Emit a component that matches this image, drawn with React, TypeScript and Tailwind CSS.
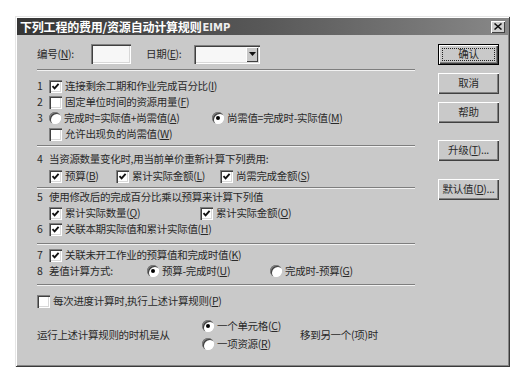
import type { ReactNode } from 'react'

function K({ children }: { children: ReactNode }) {
  return <span className="underline underline-offset-[1px]">{children}</span>
}

function Check({ on = false }: { on?: boolean }) {
  return (
    <span className="flex h-[13px] w-[13px] shrink-0 items-center justify-center bg-white shadow-[inset_1px_1px_0_#808080,inset_2px_2px_0_#404040,inset_-1px_-1px_0_#ffffff,inset_-2px_-2px_0_#d8d8d8]">
      {on && (
        <svg width="9" height="9" viewBox="0 0 9 9">
          <path d="M1.5 4.2 L3.6 6.4 L7.6 1.8" fill="none" stroke="#111" strokeWidth="1.9" />
        </svg>
      )}
    </span>
  )
}

function Radio({ on = false }: { on?: boolean }) {
  return (
    <span className="flex h-[12px] w-[12px] shrink-0 items-center justify-center rounded-full bg-white shadow-[inset_1px_1px_0_#808080,inset_2px_2px_0_#404040,inset_-1px_-1px_0_#ffffff]">
      {on && <span className="h-[4px] w-[4px] rounded-full bg-black" />}
    </span>
  )
}

function Sep() {
  return <div className="h-[2px] border-t border-b border-t-[#7e7e7e] border-b-[#f2f2f2]" />
}

function Btn({ children, def = false }: { children: ReactNode; def?: boolean }) {
  if (def) {
    return (
      <div className="h-[21px] w-[61px] border border-black">
        <div className="flex h-full w-full p-[3px] shadow-[inset_1px_1px_0_#ffffff,inset_-1px_-1px_0_#404040,inset_-2px_-2px_0_#808080]">
          <div className="flex flex-1 items-center justify-center border border-dotted border-[#222]">{children}</div>
        </div>
      </div>
    )
  }
  return (
    <div className="flex h-[21px] w-[61px] items-center justify-center shadow-[inset_1px_1px_0_#ffffff,inset_-1px_-1px_0_#404040,inset_-2px_-2px_0_#808080]">
      {children}
    </div>
  )
}

// one line of the rule list: number column, then the control
function Row({ n, children, className = '' }: { n?: string; children: ReactNode; className?: string }) {
  return (
    <div className={'flex h-[16px] items-center ' + className}>
      <span className="w-[12px] shrink-0">{n}</span>
      {children}
    </div>
  )
}

function Opt({ box, children, w }: { box: ReactNode; children: ReactNode; w?: string }) {
  return (
    <div className={'flex shrink-0 items-center gap-[3px] ' + (w ?? '')}>
      {box}
      <span>{children}</span>
    </div>
  )
}

export default function App() {
  return (
    <div className="h-[368px] w-[527px] overflow-hidden bg-white pl-[15px] pt-[16px] font-['Noto_Sans_CJK_SC',sans-serif] text-[10.5px] leading-none tracking-[-0.3px] text-[#2a2a2a]">
      <div className="flex h-[351px] w-[495px] flex-col bg-[#c9c9c9] p-[2px] shadow-[inset_1px_1px_0_#e6e6e6,inset_-1px_-1px_0_#3a3a3a,inset_2px_2px_0_#ffffff,inset_-2px_-2px_0_#858585]">
        {/* Title bar */}
        <div className="flex h-[17px] shrink-0 items-center bg-linear-to-r from-[#363636] via-[#585858] to-[#888888] pl-[3px] pr-[3px]">
          <span className="text-[12px] font-bold tracking-[-0.2px] text-white">下列工程的费用/资源自动计算规则</span>
          <span className="ml-[1px] mt-[2px] font-['DejaVu_Sans',sans-serif] text-[10px] font-bold tracking-[0px] text-[#eeeeee]">EIMP</span>
          <div className="ml-auto flex h-[12px] w-[14px] items-center justify-center bg-[#cfcfcf] shadow-[inset_1px_1px_0_#ffffff,inset_-1px_-1px_0_#404040]">
            <svg width="8" height="7" viewBox="0 0 8 7">
              <path d="M0.5 0.5 L7.5 6.5 M7.5 0.5 L0.5 6.5" stroke="#111" strokeWidth="1.5" />
            </svg>
          </div>
        </div>

        {/* Body */}
        <div className="flex flex-1 pt-[9px]">
          <div className="ml-[20px] flex w-[378px] flex-col">
            <div className="flex h-[20px] items-center">
              <span className="w-[54px]">
                编号(<K>N</K>):
              </span>
              <div className="h-[20px] w-[40px] bg-[#f7f7f7] shadow-[inset_1px_1px_0_#808080,inset_2px_2px_0_#404040,inset_-1px_-1px_0_#ffffff,inset_-2px_-2px_0_#d8d8d8]" />
              <span className="ml-[15px] w-[48px]">
                日期(<K>E</K>):
              </span>
              <div className="flex h-[19px] w-[66px] bg-[#f7f7f7] p-[2px] shadow-[inset_1px_1px_0_#808080,inset_2px_2px_0_#404040,inset_-1px_-1px_0_#ffffff,inset_-2px_-2px_0_#d8d8d8]">
                <div className="flex-1" />
                <div className="flex w-[12px] items-center justify-center bg-[#c9c9c9] shadow-[inset_1px_1px_0_#ffffff,inset_-1px_-1px_0_#404040]">
                  <svg width="7" height="4" viewBox="0 0 7 4">
                    <path d="M0 0 H7 L3.5 4 Z" fill="#111" />
                  </svg>
                </div>
              </div>
            </div>

            <div className="mt-[5px]">
              <Sep />
            </div>

            <Row n="1" className="mt-[7px]">
              <Opt box={<Check on />}>
                连接剩余工期和作业完成百分比(<K>I</K>)
              </Opt>
            </Row>
            <Row n="2">
              <Opt box={<Check />}>
                固定单位时间的资源用量(<K>F</K>)
              </Opt>
            </Row>
            <Row n="3">
              <Opt box={<Radio />} w="w-[163px]">
                完成时=实际值+尚需值(<K>A</K>)
              </Opt>
              <Opt box={<Radio on />}>
                尚需值=完成时-实际值(<K>M</K>)
              </Opt>
            </Row>
            <Row>
              <Opt box={<Check />}>
                允许出现负的尚需值(<K>W</K>)
              </Opt>
            </Row>

            <div className="mt-[3px]">
              <Sep />
            </div>

            <Row n="4" className="mt-[4px]">
              <span>当资源数量变化时,用当前单价重新计算下列费用:</span>
            </Row>
            <Row className="mt-[1px]">
              <Opt box={<Check on />} w="w-[67px]">
                预算(<K>B</K>)
              </Opt>
              <Opt box={<Check on />} w="w-[104px]">
                累计实际金额(<K>L</K>)
              </Opt>
              <Opt box={<Check on />}>
                尚需完成金额(<K>S</K>)
              </Opt>
            </Row>

            <div className="mt-[3px]">
              <Sep />
            </div>

            <Row n="5">
              <span>使用修改后的完成百分比乘以预算来计算下列值</span>
            </Row>
            <Row>
              <Opt box={<Check on />} w="w-[151px]">
                累计实际数量(<K>Q</K>)
              </Opt>
              <Opt box={<Check on />}>
                累计实际金额(<K>O</K>)
              </Opt>
            </Row>
            <Row n="6">
              <Opt box={<Check on />}>
                关联本期实际值和累计实际值(<K>H</K>)
              </Opt>
            </Row>

            <div className="mt-[6px]">
              <Sep />
            </div>

            <Row n="7" className="mt-[2px]">
              <Opt box={<Check on />}>
                关联未开工作业的预算值和完成时值(<K>K</K>)
              </Opt>
            </Row>
            <Row n="8">
              <span className="w-[98px] shrink-0">差值计算方式:</span>
              <Opt box={<Radio on />} w="w-[123px]">
                预算-完成时(<K>U</K>)
              </Opt>
              <Opt box={<Radio />}>
                完成时-预算(<K>G</K>)
              </Opt>
            </Row>

            <div className="mt-[5px]">
              <Sep />
            </div>

            <div className="mt-[7px] flex h-[16px] items-center">
              <Opt box={<Check />}>
                每次进度计算时,执行上述计算规则(<K>P</K>)
              </Opt>
            </div>

            <div className="mt-[8px] flex items-center">
              <span className="w-[165px] shrink-0">运行上述计算规则的时机是从</span>
              <div className="flex w-[98px] shrink-0 flex-col">
                <div className="flex h-[18px] items-center">
                  <Opt box={<Radio on />}>
                    一个单元格(<K>C</K>)
                  </Opt>
                </div>
                <div className="flex h-[18px] items-center">
                  <Opt box={<Radio />}>
                    一项资源(<K>R</K>)
                  </Opt>
                </div>
              </div>
              <span>移到另一个(项)时</span>
            </div>
          </div>

          {/* Buttons */}
          <div className="ml-[23px] flex w-[61px] flex-col">
            <Btn def>确认</Btn>
            <div className="mt-[8px]">
              <Btn>取消</Btn>
            </div>
            <div className="mt-[8px]">
              <Btn>帮助</Btn>
            </div>
            <div className="mt-[17px]">
              <Btn>
                升级(<K>T</K>)...
              </Btn>
            </div>
            <div className="mt-[18px]">
              <Btn>
                默认值(<K>D</K>)...
              </Btn>
            </div>
          </div>
        </div>
      </div>
    </div>
  )
}
